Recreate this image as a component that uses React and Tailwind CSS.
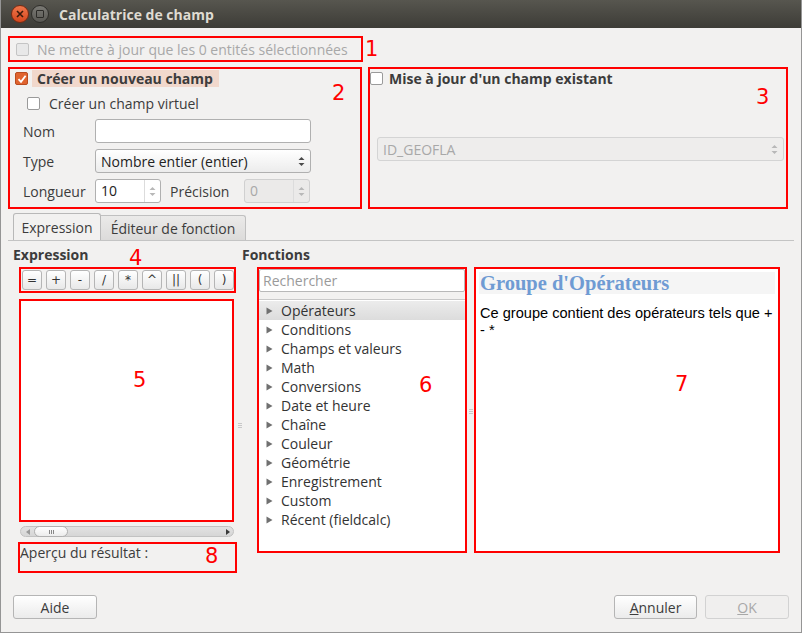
import React from "react";

const ops = ["=", "+", "-", "/", "*", "^", "||", "(", ")"];
const groups = [
  "Opérateurs",
  "Conditions",
  "Champs et valeurs",
  "Math",
  "Conversions",
  "Date et heure",
  "Chaîne",
  "Couleur",
  "Géométrie",
  "Enregistrement",
  "Custom",
  "Récent (fieldcalc)",
];

function Mark({ children, className }) {
  return (
    <span
      className={
        "absolute text-[21px] leading-none font-normal text-[#ff0000] font-['DejaVu_Sans'] " +
        className
      }
    >
      {children}
    </span>
  );
}

function Check({ checked, disabled }) {
  if (checked) {
    return (
      <span className="w-[13px] h-[13px] rounded-[2px] bg-[#e0642f] border border-[#b94c20] flex items-center justify-center shrink-0">
        <svg width="10" height="10" viewBox="0 0 10 10">
          <path d="M1.5 5.2 L4 7.8 L8.6 1.8" stroke="#fff" strokeWidth="1.8" fill="none" />
        </svg>
      </span>
    );
  }
  return (
    <span
      className={
        "w-[13px] h-[13px] rounded-[2px] border shrink-0 " +
        (disabled ? "border-[#c4c4c4] bg-[#e8e8e8]" : "border-[#9a9a9a] bg-white")
      }
    />
  );
}

function Arrows({ disabled }) {
  const c = disabled ? "#b8b8b8" : "#4a4a4a";
  return (
    <svg width="7" height="11" viewBox="0 0 7 11">
      <path d="M0.5 4 L3.5 1 L6.5 4 Z" fill={c} />
      <path d="M0.5 7 L3.5 10 L6.5 7 Z" fill={c} />
    </svg>
  );
}

function Spin({ value, disabled }) {
  return (
    <div
      className={
        "w-[66px] h-[24px] rounded-[3px] border flex " +
        (disabled ? "border-[#d0d0d0] bg-[#ebeae9] text-[#a8a8a8]" : "border-[#b0b0b0] bg-white text-[#222]")
      }
    >
      <span className="flex-1 pl-[5px] leading-[22px]">{value}</span>
      <div className="w-[16px] border-l border-[#dcdcdc] flex items-center justify-center">
        <Arrows disabled />
      </div>
    </div>
  );
}

export default function App() {
  return (
    <div className="w-[802px] h-[633px] bg-[#f2f1f0] border-x border-b border-[#959595] flex flex-col font-['Open_Sans',sans-serif] text-[14px] text-[#3c3c3c] overflow-hidden">
      {/* title bar */}
      <div className="h-[28px] bg-gradient-to-b from-[#57564f] to-[#3d3c37] flex items-center px-[10px] gap-[2px] shrink-0">
        <span className="w-[18px] h-[18px] rounded-full bg-gradient-to-b from-[#f0764a] to-[#d4461c] border border-[#7a2b12] flex items-center justify-center">
          <svg width="8" height="8" viewBox="0 0 8 8">
            <path d="M1 1 L7 7 M7 1 L1 7" stroke="#3a1a0c" strokeWidth="1.6" />
          </svg>
        </span>
        <span className="w-[18px] h-[18px] rounded-full bg-gradient-to-b from-[#7a7974] to-[#5a5954] border border-[#2f2e2a] flex items-center justify-center">
          <span className="w-[8px] h-[8px] border-[1.5px] border-[#2c2b28] rounded-[1px]" />
        </span>
        <span className="ml-[8px] font-bold text-[14px] text-[#dfdbd2]">Calculatrice de champ</span>
      </div>

      <div className="flex-1 flex flex-col px-[7px] pt-[8px]">
        {/* 1 */}
        <div className="relative w-[355px] h-[26px] border-2 border-[#ff0000] flex items-center pl-[6px] gap-[8px] text-[#a8a8a8]">
          <Check disabled />
          <span>Ne mettre à jour que les 0 entités sélectionnées</span>
          <Mark className="left-[355px] top-[1px]">1</Mark>
        </div>

        <div className="flex gap-[6px] mt-[5px] h-[142px]">
          {/* 2 */}
          <div className="relative w-[354px] border-2 border-[#ff0000] flex flex-col pt-[1px]">
            <div className="flex items-center">
              <span className="ml-[5px]">
                <Check checked />
              </span>
              <span className="ml-[4px] h-[17px] w-[187px] bg-[#f1d8cc] font-bold pl-[5px] leading-[17px]">Créer un nouveau champ</span>
            </div>
            <div className="flex items-center ml-[17px] mt-[8px] gap-[9px] leading-[17px]">
              <Check />
              <span>Créer un champ virtuel</span>
            </div>
            <div className="flex items-center mt-[7px]">
              <span className="w-[85px] pl-[13px]">Nom</span>
              <div className="w-[216px] h-[24px] bg-white border border-[#b0b0b0] rounded-[3px]" />
            </div>
            <div className="flex items-center mt-[6px]">
              <span className="w-[85px] pl-[13px]">Type</span>
              <div className="w-[216px] h-[24px] bg-gradient-to-b from-white to-[#ececec] border border-[#b0b0b0] rounded-[3px] flex items-center justify-between px-[5px] text-[#222]">
                <span>Nombre entier (entier)</span>
                <Arrows />
              </div>
            </div>
            <div className="flex items-center mt-[6px]">
              <span className="w-[85px] pl-[13px]">Longueur</span>
              <Spin value="10" />
              <span className="ml-[9px] w-[74px]">Précision</span>
              <Spin value="0" disabled />
            </div>
            <Mark className="left-[322px] top-[14px]">2</Mark>
          </div>

          {/* 3 */}
          <div className="relative w-[420px] border-2 border-[#ff0000] flex flex-col pt-[1px]">
            <div className="flex items-center gap-[6px] leading-[17px]">
              <Check />
              <span className="font-bold">Mise à jour d'un champ existant</span>
            </div>
            <div className="ml-[7px] mt-[50px] w-[407px] h-[24px] rounded-[3px] border border-[#d4d4d4] bg-[#eeedec] flex items-center justify-between px-[5px] text-[#a8a8a8]">
              <span>ID_GEOFLA</span>
              <Arrows disabled />
            </div>
            <Mark className="left-[386px] top-[18px]">3</Mark>
          </div>
        </div>

        {/* tabs */}
        <div className="flex mt-[4px] ml-[5px] h-[27px] items-end">
          <div className="h-[27px] w-[88px] border border-b-0 border-[#b8b8b8] rounded-t-[3px] bg-[#f2f1f0] flex items-center justify-center">
            Expression
          </div>
          <div className="h-[25px] w-[145px] border border-l-0 border-b-0 border-[#c0c0c0] rounded-tr-[3px] bg-gradient-to-b from-[#ebeae9] to-[#dcdbda] flex items-center justify-center">
            Éditeur de fonction
          </div>
        </div>
        <div className="border-t border-[#c4c4c4] flex-1 flex pt-[4px]">
          {/* left column */}
          <div className="w-[230px] flex flex-col pl-[5px]">
            <div className="relative h-[22px] font-bold leading-[20px]">
              Expression
              <Mark className="left-[116px] top-[3px]">4</Mark>
            </div>
            <div className="ml-[6px] w-[217px] h-[26px] border-2 border-[#ff0000] flex items-center gap-[4px] pl-[1px]">
              {ops.map((o) => (
                <span
                  key={o}
                  className="w-[20px] h-[20px] rounded-[3px] border border-[#b5b5b5] bg-gradient-to-b from-white to-[#e8e8e8] flex items-center justify-center text-[12px] text-[#333] font-['DejaVu_Sans']"
                >
                  {o}
                </span>
              ))}
            </div>
            <div className="relative ml-[6px] mt-[6px] w-[215px] h-[223px] border-2 border-[#ff0000] bg-white">
              <Mark className="left-[112px] top-[69px]">5</Mark>
            </div>
            <div className="ml-[7px] mt-[4px] w-[214px] h-[11px] rounded-full border border-[#c2c2c2] bg-gradient-to-b from-[#e2e2e2] to-[#d6d6d6] flex items-center">
              <svg className="ml-[5px]" width="4" height="6" viewBox="0 0 4 6">
                <path d="M4 0 L0 3 L4 6 Z" fill="#9a9a9a" />
              </svg>
              <span className="ml-[4px] w-[34px] h-[11px] rounded-full border border-[#b0b0b0] bg-gradient-to-b from-white to-[#ececec] flex items-center justify-center gap-[1px]">
                <span className="w-px h-[4px] bg-[#888]" />
                <span className="w-px h-[4px] bg-[#888]" />
                <span className="w-px h-[4px] bg-[#888]" />
              </span>
              <span className="flex-1" />
              <svg className="mr-[3px]" width="4" height="6" viewBox="0 0 4 6">
                <path d="M0 0 L4 3 L0 6 Z" fill="#3a3a3a" />
              </svg>
            </div>
            <div className="relative ml-[5px] mt-[5px] w-[219px] h-[31px] border-2 border-[#ff0000] leading-[16px] pt-[1px]">
              Aperçu du résultat :
              <Mark className="left-[185px] top-[2px]">8</Mark>
            </div>
          </div>

          {/* splitter */}
          <div className="w-[4px] flex flex-col items-center justify-center gap-[1px] pt-[10px]">
            <span className="w-[4px] h-px bg-[#c8c8c8]" />
            <span className="w-[4px] h-px bg-[#c8c8c8]" />
            <span className="w-[4px] h-px bg-[#c8c8c8]" />
          </div>

          {/* functions */}
          <div className="flex flex-col">
            <div className="h-[22px] font-bold leading-[20px]">Fonctions</div>
            <div className="flex">
              <div className="relative ml-[15px] w-[210px] h-[286px] border-2 border-[#ff0000] bg-[#f2f1f0] flex flex-col">
                <div className="h-[23px] bg-white border border-[#b8b8b8] rounded-[2px] px-[3px] leading-[21px] text-[#9a9a9a]">Rechercher</div>
                <div className="mt-[7px] flex-1 bg-white border-t border-[#c8c8c8] pt-px">
                  {groups.map((g, i) => (
                    <div
                      key={g}
                      className={
                        "h-[19px] flex items-center pl-[7px] gap-[8px] text-[#333] " +
                        (i === 0 ? "bg-gradient-to-b from-[#ececec] to-[#dcdcdc]" : "")
                      }
                    >
                      <svg width="7" height="8" viewBox="0 0 7 8">
                        <path d="M0.5 0.5 L6.5 4 L0.5 7.5 Z" fill="#707070" />
                      </svg>
                      <span>{g}</span>
                    </div>
                  ))}
                  <Mark className="left-[160px] top-[106px]">6</Mark>
                </div>
              </div>
              <div className="w-[7px] flex flex-col items-center justify-center gap-[1px] pt-[2px]">
                <span className="w-[4px] h-px bg-[#c8c8c8]" />
                <span className="w-[4px] h-px bg-[#c8c8c8]" />
                <span className="w-[4px] h-px bg-[#c8c8c8]" />
              </div>
              <div className="relative w-[306px] h-[286px] border-2 border-[#ff0000] bg-white p-[3px] font-['Liberation_Sans',Arial,sans-serif] text-black">
                <div className="bg-[#f5f5f5] h-[22px] font-['Liberation_Serif',serif] font-bold text-[20.5px] text-[#6f9bd3] leading-[22px] pl-[1px]">
                  Groupe d'Opérateurs
                </div>
                <p className="mt-[11px] text-[14.6px] leading-[17px] pl-[1px]">
                  Ce groupe contient des opérateurs tels que + - *
                </p>
                <Mark className="left-[199px] top-[105px]">7</Mark>
              </div>
            </div>
          </div>
        </div>

        {/* bottom buttons */}
        <div className="flex items-center justify-between h-[24px] ml-[5px] mr-[5px] mb-[13px]">
          <span className="w-[84px] h-[24px] rounded-[3px] border border-[#b5b5b5] bg-gradient-to-b from-white to-[#ebebeb] flex items-center justify-center">
            Aide
          </span>
          <div className="flex gap-[8px]">
            <span className="w-[83px] h-[24px] rounded-[3px] border border-[#b5b5b5] bg-gradient-to-b from-white to-[#ebebeb] flex items-center justify-center">
              <span>
                <span className="underline">A</span>nnuler
              </span>
            </span>
            <span className="w-[84px] h-[24px] rounded-[3px] border border-[#d2d2d2] bg-[#f0efee] flex items-center justify-center text-[#a8a8a8]">
              <span>
                <span className="underline">O</span>K
              </span>
            </span>
          </div>
        </div>
      </div>
    </div>
  );
}
